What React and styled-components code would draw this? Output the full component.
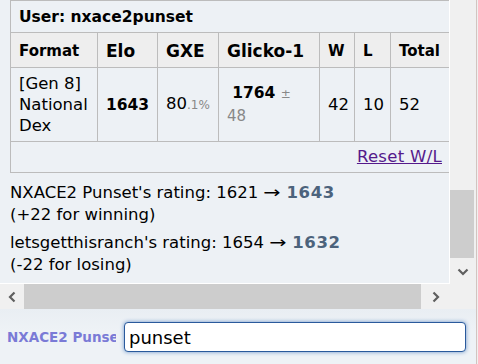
import React from "react";
import styled, { createGlobalStyle } from "styled-components";

const GlobalStyle = createGlobalStyle`
  html, body {
    margin: 0;
    padding: 0;
    background: #f0f0f0;
  }
  body {
    font-family: "DejaVu Sans", Verdana, sans-serif;
    overflow: hidden;
  }
`;

const Frame = styled.div`
  width: 478px;
  height: 364px;
  display: grid;
  grid-template-columns: 476px 2px;
  overflow: hidden;
`;

const RightEdge = styled.div`
  background: #f0f0f0;
  border-left: 1px solid #d2c4c0;
`;

const Column = styled.div`
  display: flex;
  flex-direction: column;
  min-width: 0;
`;

const LogArea = styled.div`
  display: grid;
  grid-template-columns: 450px 26px;
  grid-template-rows: 284px 25px;
  background: #f0f0f0;
`;

const Content = styled.div`
  background: #edf1f5;
  border-right: 1px solid #fff;
  border-bottom: 1px solid #fff;
  padding-left: 10px;
  overflow: hidden;
  color: #000;
`;

const Table = styled.table`
  border-collapse: collapse;
  table-layout: fixed;
  width: 440px;
  font-size: 16.5px;
  line-height: 21px;
`;

const Caption = styled.th`
  text-align: left;
  font-size: 15.5px;
  font-weight: bold;
  padding: 5px 8px 4px;
  border: 1px solid #bcbcbc;
  height: 22px;
`;

const Head = styled.th`
  text-align: left;
  background: #eeeeee;
  font-weight: bold;
  font-size: ${(p) => (p.$big ? "17px" : "15px")};
  padding: 2px 8px 0;
  height: 32px;
  border: 1px solid #bcbcbc;
`;

const Cell = styled.td`
  padding: 5px 8px;
  border: 1px solid #bcbcbc;
  vertical-align: middle;
  height: 62px;
`;

const Strong = styled.strong`
  font-size: ${(p) => p.$size || "16px"};
`;

const Faint = styled.small`
  color: #888;
  font-size: ${(p) => p.$size || "12px"};
`;

const ResetCell = styled.td`
  text-align: right;
  padding: 4px 8px 5px;
  border: 1px solid #bcbcbc;
  height: 21px;
`;

const ResetLink = styled.a`
  color: #551a8b;
  text-decoration: underline;
  letter-spacing: 0.3px;
  cursor: pointer;
`;

const Ratings = styled.div`
  padding-top: 9px;
  font-size: 16.5px;
  line-height: 22px;
`;

const Para = styled.p`
  margin: 0 0 6px;
`;

const Arrow = styled.span`
  display: inline-block;
  transform: scaleX(1.25);
  margin: 0 2px;
`;

const NewRating = styled.strong`
  color: #4c637c;
  letter-spacing: 0.6px;
`;

const VScroll = styled.div`
  display: flex;
  flex-direction: column;
  background: #f0f0f0;
`;

const VThumb = styled.div`
  margin-top: 190px;
  height: 68px;
  width: 24px;
  background: #cdcdcd;
`;

const Spacer = styled.div`
  flex: 1;
`;

const ArrowBtn = styled.div`
  display: flex;
  align-items: center;
  justify-content: center;
  width: ${(p) => p.$w || "26px"};
  height: ${(p) => p.$h || "25px"};
  flex: none;
`;

const HScroll = styled.div`
  display: flex;
  background: #f0f0f0;
`;

const HThumb = styled.div`
  width: 397px;
  background: #cdcdcd;
`;

const Corner = styled.div`
  background: #f0f0f0;
`;

const Controls = styled.div`
  flex: 1;
  display: flex;
  align-items: center;
  gap: 8px;
  padding: 0 10px 0 7px;
  background: linear-gradient(#e9eef3, #eef2f6 40%);
`;

const Label = styled.div`
  width: 109px;
  flex: none;
  overflow: hidden;
  white-space: nowrap;
  color: #7a7ad6;
  font-weight: bold;
  font-size: 13.5px;
`;

const Input = styled.input`
  flex: 1;
  min-width: 0;
  height: 30px;
  box-sizing: border-box;
  border: 1px solid #2a5a9c;
  border-radius: 4px;
  box-shadow: 0 0 4px #6b95c9;
  outline: none;
  padding: 0 4px;
  font-family: "DejaVu Sans", Verdana, sans-serif;
  font-size: 18px;
  color: #000;
  caret-color: #000;
  background: #fff;
  margin-top: 1px;
`;

const Chevron = ({ dir }) => {
  const rot = { down: 0, left: 90, right: -90 }[dir];
  return (
    <svg width="12" height="8" viewBox="0 0 12 8" style={{ transform: `rotate(${rot}deg)` }}>
      <path d="M1.5 1.5 L6 6 L10.5 1.5" fill="none" stroke="#5f5f5f" strokeWidth="2.2" />
    </svg>
  );
};

export default function App() {
  return (
    <>
      <GlobalStyle />
      <Frame>
        <Column>
          <LogArea>
            <Content>
              <Table>
                <colgroup>
                  <col style={{ width: 87 }} />
                  <col style={{ width: 60 }} />
                  <col style={{ width: 61 }} />
                  <col style={{ width: 101 }} />
                  <col style={{ width: 35 }} />
                  <col style={{ width: 36 }} />
                  <col style={{ width: 60 }} />
                </colgroup>
                <tbody>
                  <tr>
                    <Caption colSpan={7}>User: nxace2punset</Caption>
                  </tr>
                  <tr>
                    <Head>Format</Head>
                    <Head $big>Elo</Head>
                    <Head $big>GXE</Head>
                    <Head $big>Glicko-1</Head>
                    <Head>W</Head>
                    <Head>L</Head>
                    <Head>Total</Head>
                  </tr>
                  <tr>
                    <Cell>[Gen 8] National Dex</Cell>
                    <Cell>
                      <Strong $size="15.5px">1643</Strong>
                    </Cell>
                    <Cell>
                      80<Faint>.1%</Faint>
                    </Cell>
                    <Cell>
                      &nbsp;<Strong $size="15.5px">1764</Strong> <Faint>±</Faint>
                      <br />
                      <Faint $size="15px">48</Faint>
                    </Cell>
                    <Cell>42</Cell>
                    <Cell>10</Cell>
                    <Cell>52</Cell>
                  </tr>
                  <tr>
                    <ResetCell colSpan={7}>
                      <ResetLink>Reset W/L</ResetLink>
                    </ResetCell>
                  </tr>
                </tbody>
              </Table>
              <Ratings>
                <Para>
                  NXACE2 Punset's rating: 1621 <Arrow>→</Arrow> <NewRating>1643</NewRating>
                  <br />
                  (+22 for winning)
                </Para>
                <Para>
                  letsgetthisranch's rating: 1654 <Arrow>→</Arrow> <NewRating>1632</NewRating>
                  <br />
                  (-22 for losing)
                </Para>
              </Ratings>
            </Content>
            <VScroll>
              <VThumb />
              <Spacer />
              <ArrowBtn>
                <Chevron dir="down" />
              </ArrowBtn>
            </VScroll>
            <HScroll>
              <ArrowBtn $w="24px">
                <Chevron dir="left" />
              </ArrowBtn>
              <HThumb />
              <Spacer />
              <ArrowBtn $w="29px">
                <Chevron dir="right" />
              </ArrowBtn>
            </HScroll>
            <Corner />
          </LogArea>
          <Controls>
            <Label>NXACE2 Punset</Label>
            <Input defaultValue="punset" autoFocus />
          </Controls>
        </Column>
        <RightEdge />
      </Frame>
    </>
  );
}
